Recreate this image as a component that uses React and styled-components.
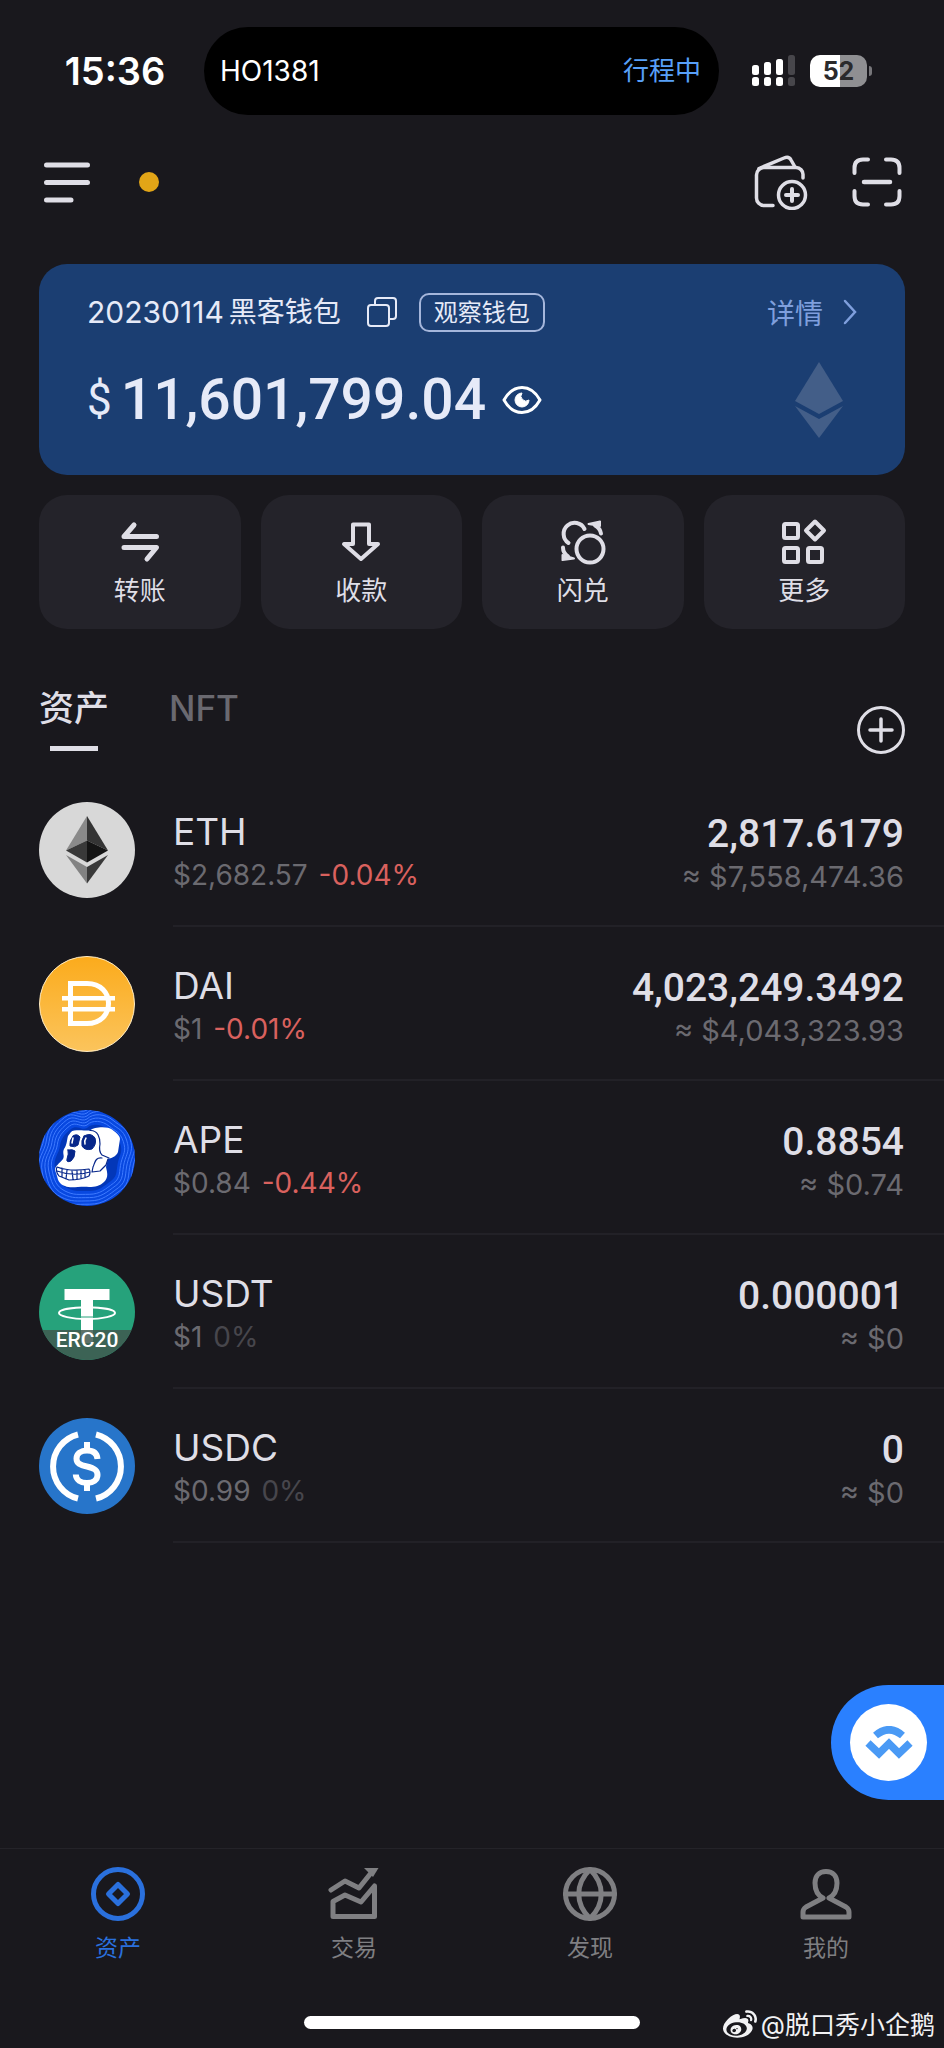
import React, { useState } from "react";
import styled, { createGlobalStyle } from "styled-components";
import { FaWeibo } from "react-icons/fa";

const sans = `Inter, "Noto Sans CJK SC", sans-serif`;
const digits = `Roboto, "Noto Sans CJK SC", sans-serif`;

const assets = [
  { symbol: "ETH", price: "$2,682.57", change: "-0.04%", amount: "2,817.6179", value: "≈ $7,558,474.36" },
  { symbol: "DAI", price: "$1", change: "-0.01%", amount: "4,023,249.3492", value: "≈ $4,043,323.93" },
  { symbol: "APE", price: "$0.84", change: "-0.44%", amount: "0.8854", value: "≈ $0.74" },
  { symbol: "USDT", price: "$1", change: "0%", amount: "0.000001", value: "≈ $0" },
  { symbol: "USDC", price: "$0.99", change: "0%", amount: "0", value: "≈ $0" },
];

const EthCoin = () => (
  <svg width="96" height="96" viewBox="0 0 96 96">
    <circle cx="48" cy="48" r="48" fill="#d8d8d8" />
    <path d="M48 14 27 48.500 48 38.500Z" fill="#8a8a8a" />
    <path d="M48 14 69 48.500 48 38.500Z" fill="#343434" />
    <path d="M27 48.500 48 38.500V60.500Z" fill="#393939" />
    <path d="M69 48.500 48 38.500V60.500Z" fill="#141414" />
    <path d="M27 53 48 65V81.500Z" fill="#828282" />
    <path d="M69 53 48 65V81.500Z" fill="#393939" />
  </svg>
);

const DaiCoin = () => (
  <svg width="96" height="96" viewBox="0 0 96 96" fill="none">
    <defs>
      <linearGradient id="dai" x1="0" y1="0" x2="0" y2="1">
        <stop offset="0" stopColor="#fbab1c" />
        <stop offset="1" stopColor="#fbc45c" />
      </linearGradient>
    </defs>
    <circle cx="48" cy="48" r="47.500" fill="url(#dai)" stroke="#fdebc5" />
    <path d="M31.500 27.500H48C62 27.500 69.500 37 69.500 47.500S62 67.500 48 67.500H31.500Z" stroke="#fff" strokeWidth="5" />
    <path d="M23 42.200H76M23 53.200H76" stroke="#fff" strokeWidth="4.600" />
  </svg>
);

const ring = "M0 -30C5 -35 14 -34 20 -29S30 -24 33 -15 33 -4 31 4 31 18 24 23 12 33 2 33 -12 34 -20 30 -30 20 -32 10 -28 -4 -27 -12 -22 -24 -16 -29 -5 -27 0 -30Z";

const ApeCoin = () => (
  <svg width="96" height="96" viewBox="0 0 96 96" fill="none">
    <defs>
      <clipPath id="ape">
        <circle cx="48" cy="48" r="48" />
      </clipPath>
    </defs>
    <g clipPath="url(#ape)">
      <rect width="96" height="96" fill="#0848e0" />
      <g stroke="#3f7bff" transform="translate(48 48)">
        {[1.1, 1.2, 1.3, 1.4, 1.5, 1.6, 1.72, 1.84].map((s) => (
          <path key={s} d={ring} transform={`scale(${s})`} strokeWidth={1 / s} />
        ))}
      </g>
      <path d={ring} transform="translate(48 48)" fill="#0337b8" />
    </g>
    <path
      d="M32 22C35 19 47 21 51 20.500C55 17 68 16 73 19.500C76 22 81 25 81 29L79 42C77 47 72 48 69 49L67 57C68 62 70 67 65 72C61 76 56 77 50 77C40 76 32 79 26 76C20 74 19 70 18 66L16 60C16 56 20 54 24 49C26 46 23 43 25 39C28 35 28 29 29 26Z"
      fill="#fff"
    />
    <g stroke="#06268a" strokeLinejoin="round" strokeLinecap="round">
      <path d="M51 20.500C59 20 61 28 61 34C60 39 61 43 63 45L70 48M63 48C56 47 56 53 54 57L53 62 61 61 67 55 69 49" strokeWidth="1.200" />
      <path d="M34 26Q38 23 41 27L39 35Q36 38 31 36Q30 31 34 26Z" fill="#06268a" />
      <path d="M45 26Q52 22 56 28Q58 34 53 39Q46 41 43 36Q42 30 45 26Z" fill="#06268a" />
      <path d="M29 40Q34 39 36 41Q36 48 32 51Q27 53 28 49Q30 44 29 40Z" fill="#06268a" />
      <path d="M18 57Q31 62 50 59Q52 62 50 66Q42 70 30 70L20 66Q16 61 18 57ZM18 61Q34 67 51 62M23 58V67M28 60 27 69M33 61 34 69M38 61V69M42 60V68M46 60V67" strokeWidth="1.200" />
      <path d="M47 28Q45 31 46 34M34 28 33 33" stroke="#fff" strokeWidth="1.500" />
    </g>
  </svg>
);

const UsdtCoin = () => (
  <svg width="96" height="96" viewBox="0 0 96 96" fill="none">
    <circle cx="48" cy="48" r="48" fill="#26a27b" />
    <path d="M25.500 25H70.500V36H54V79H42V36H25.500Z" fill="#fff" />
    <path d="M42 43.500C29 44 20 46 20 49S32 55 48 55 76 52 76 49 67 44 54 43.500" stroke="#fff" strokeWidth="2" />
    <path d="M42 53H54" stroke="#26a27b" />
    <path d="M3.500 66H92.500A48 48 0 0 1 3.500 66Z" fill="#41584f" fillOpacity="0.850" />
  </svg>
);

const UsdcCoin = () => (
  <svg width="96" height="96" viewBox="0 0 96 96" fill="none">
    <circle cx="48" cy="48" r="48" fill="#2775ca" />
    <g stroke="#fff" strokeWidth="6">
      <path d="M39 16.500A33 33 0 0 0 39 80.500M57 16.500A33 33 0 0 1 57 80.500" strokeLinejoin="round" />
      <path d="M58.500 41C58 35 54 32.500 48 32.500S37.500 35.500 37.500 40.500 41 47 48 48.500 58.500 52 58.500 57 54 65 48 65 37 62 36.800 56.500" />
      <path d="M48 24V34M48 63V73" />
    </g>
  </svg>
);

const coins = { ETH: EthCoin, DAI: DaiCoin, APE: ApeCoin, USDT: UsdtCoin, USDC: UsdcCoin };

const actions = [
  {
    label: "转账",
    icon: <path d="M40.500 18.500H8L18 7M8 29.500H40.500L31 41" strokeWidth="5" />,
  },
  {
    label: "收款",
    icon: <path d="M16 6.500H32V26H41L24 41 7 26H16Z" />,
  },
  {
    label: "闪兑",
    icon: (
      <>
        <circle cx="31" cy="31" r="13.500" />
        <path d="M9.500 25A11 11 0 1 1 25.500 11M42 15.500Q41 10 36 7.500M4 29.500Q4 35 9 38.500" />
        <path d="M29.500 6 41 3.500 41 8ZM15 40.500 3.500 42 3.500 37Z" fill="currentColor" strokeWidth="2" />
      </>
    ),
  },
  {
    label: "更多",
    icon: (
      <>
        <rect x="4" y="6" width="14" height="14" rx="1.500" />
        <rect x="4" y="30" width="14" height="14" rx="1.500" />
        <rect x="28" y="30" width="14" height="14" rx="1.500" />
        <path d="M35 3.500 44 12.500 35 21.500 26 12.500Z" />
      </>
    ),
  },
];

const navItems = [
  {
    label: "资产",
    icon: (
      <>
        <circle cx="27" cy="27" r="24.500" />
        <path d="M27 17.500 36.500 27 27 36.500 17.500 27Z" />
      </>
    ),
  },
  {
    label: "交易",
    icon: (
      <>
        <path d="M4 23 18 14 32 21 44 6M6 49.500V34.500L18 28 34 35 47.500 19V49.500Z" />
        <path d="M37 1H51.500L46 10Z" fill="currentColor" stroke="none" />
      </>
    ),
  },
  {
    label: "发现",
    icon: (
      <>
        <circle cx="27" cy="27" r="24.500" />
        <path d="M27 2.500C12 17 12 37 27 51.500C42 37 42 17 27 2.500ZM2.500 27H51.500" />
      </>
    ),
  },
  {
    label: "我的",
    icon: (
      <path d="M24 31C18 28 16 22 16 16C16 9 20 4.500 27 4.500S38 9 38 16C38 22 36 28 30 31M24 31 7 40Q4 42 4 45V50H50V45Q50 42 47 40L30 31" />
    ),
  },
];

const App = () => {
  const [tab, setTab] = useState("资产");
  const [nav, setNav] = useState("资产");
  const [hidden, setHidden] = useState(false);

  return (
    <Page>
      <GlobalStyle />
      <StatusBar>
        <Clock>15:36</Clock>
        <Island>
          <span>HO1381</span>
          <Trip>行程中</Trip>
        </Island>
        <StatusIcons>
          <svg width="44" height="32" viewBox="0 0 44 32" fill="#fff">
            <rect x="0" y="10" width="7" height="10" rx="2.500" />
            <rect x="12" y="7" width="7" height="13" rx="2.500" />
            <rect x="24" y="4" width="7" height="16" rx="2.500" />
            <rect x="36" y="0" width="7" height="20" rx="2.500" fill="#47464b" />
            <rect x="0" y="22" width="7" height="9" rx="2.500" />
            <rect x="12" y="22" width="7" height="9" rx="2.500" />
            <rect x="24" y="22" width="7" height="9" rx="2.500" />
            <rect x="36" y="22" width="7" height="9" rx="2.500" fill="#47464b" />
          </svg>
          <Battery>52</Battery>
        </StatusIcons>
      </StatusBar>

      <Header>
        <IconButton aria-label="menu">
          <svg width="46" height="44" viewBox="0 0 46 44" stroke="currentColor" strokeWidth="5" strokeLinecap="round">
            <path d="M2.500 5H43.500M2.500 22.500H43.500M2.500 40H27" />
          </svg>
        </IconButton>
        <Dot />
        <HeaderRight>
          <IconButton aria-label="add wallet">
            <svg width="56" height="56" viewBox="0 0 56 56" fill="none" stroke="currentColor" strokeWidth="3.500" strokeLinecap="round" strokeLinejoin="round">
              <path d="M49 24V21A7 7 0 0 0 42 13.500H10A7.500 7.500 0 0 0 2.500 21V44A7.500 7.500 0 0 0 10 51.500H19" />
              <path d="M5 14.500 30 4Q35 2 37 6L41 13" />
              <circle cx="38" cy="41" r="13.500" />
              <path d="M38 35V47M32 41H44" strokeWidth="4" />
            </svg>
          </IconButton>
          <IconButton aria-label="scan">
            <svg width="50" height="50" viewBox="0 0 50 50" fill="none" stroke="currentColor" strokeWidth="4" strokeLinecap="round">
              <path d="M2.500 16V11Q2.500 2.500 11 2.500H16M34 2.500H39Q47.500 2.500 47.500 11V16M47.500 34V39Q47.500 47.500 39 47.500H34M16 47.500H11Q2.500 47.500 2.500 39V34" />
              <path d="M12 25H38" strokeWidth="4.500" />
            </svg>
          </IconButton>
        </HeaderRight>
      </Header>

      <WalletCard>
        <CardRow>
          <WalletName>
            <WalletDate>20230114</WalletDate>
            黑客钱包
          </WalletName>
          <IconButton aria-label="copy address">
            <svg width="30" height="30" viewBox="0 0 30 30" fill="none" stroke="currentColor" strokeWidth="2">
              <rect x="1" y="8" width="21" height="21" rx="3" />
              <path d="M8 8V4Q8 1 11 1H26Q29 1 29 4V19Q29 22 26 22H22" />
            </svg>
          </IconButton>
          <Badge>观察钱包</Badge>
          <DetailLink href="#detail">
            详情
            <svg width="14" height="26" viewBox="0 0 14 26" fill="none" stroke="currentColor" strokeWidth="2.500" strokeLinecap="round">
              <path d="M2 2 12 13 2 24" />
            </svg>
          </DetailLink>
        </CardRow>
        <BalanceRow>
          <Currency>$</Currency>
          <Balance>{hidden ? "******" : "11,601,799.04"}</Balance>
          <IconButton aria-label="toggle balance" onClick={() => setHidden(!hidden)}>
            <svg width="40" height="30" viewBox="0 0 40 30" fill="none" stroke="#fff" strokeWidth="3" strokeLinejoin="round">
              <path d="M2 15C7 6 13 2.500 20 2.500S33 6 38 15C33 24 27 27.500 20 27.500S7 24 2 15Z" />
              <path d="M20 8A7 7 0 1 0 27 15A5 5 0 0 1 20 8Z" fill="#fff" strokeWidth="1" />
            </svg>
          </IconButton>
          <ChainMark width="48" height="76" viewBox="0 0 48 76" fill="#435e88">
            <path d="M24 0 48 39 24 52 0 39Z" />
            <path d="M0 44 24 57 48 44 24 76Z" />
          </ChainMark>
        </BalanceRow>
      </WalletCard>

      <Actions>
        {actions.map(({ label, icon }) => (
          <ActionButton key={label}>
            <svg width="48" height="48" viewBox="0 0 48 48" fill="none" stroke="currentColor" strokeWidth="4" strokeLinejoin="round" strokeLinecap="round">
              {icon}
            </svg>
            {label}
          </ActionButton>
        ))}
      </Actions>

      <TabBar>
        {["资产", "NFT"].map((name) => (
          <Tab key={name} $active={tab === name} onClick={() => setTab(name)}>
            {name}
          </Tab>
        ))}
        <AddButton aria-label="add asset">
          <svg width="48" height="48" viewBox="0 0 48 48" fill="none" stroke="currentColor" strokeWidth="3" strokeLinecap="round">
            <circle cx="24" cy="24" r="22.500" />
            <path d="M24 13V35M13 24H35" strokeWidth="3.500" />
          </svg>
        </AddButton>
      </TabBar>

      <AssetList>
        {assets.map((asset) => {
          const Coin = coins[asset.symbol];
          return (
            <AssetRow key={asset.symbol}>
              <CoinWrapper>
                <Coin />
                {asset.symbol === "USDT" && <CoinTag>ERC20</CoinTag>}
              </CoinWrapper>
              <AssetBody>
                <AssetInfo>
                  <Symbol>{asset.symbol}</Symbol>
                  <Price>
                    {asset.price} <Change $down={asset.change.startsWith("-")}>{asset.change}</Change>
                  </Price>
                </AssetInfo>
                <AssetInfo $right>
                  <Amount>{asset.amount}</Amount>
                  <Value>{asset.value}</Value>
                </AssetInfo>
              </AssetBody>
            </AssetRow>
          );
        })}
      </AssetList>

      <ConnectButton aria-label="WalletConnect">
        <ConnectCircle>
          <svg width="48" height="34" viewBox="0 0 48 34" fill="none" stroke="#4a9af5" strokeWidth="7.500">
            <path d="M10.500 9.500Q24 -2 37.500 9.500" />
            <path d="M3 17 14 27.500 24 17.500 34 27.500 45 17" />
          </svg>
        </ConnectCircle>
      </ConnectButton>

      <BottomNav>
        {navItems.map(({ label, icon }) => (
          <NavButton key={label} $active={nav === label} onClick={() => setNav(label)}>
            <svg width="54" height="54" viewBox="0 0 54 54" fill="none" stroke="currentColor" strokeWidth="5" strokeLinejoin="round" strokeLinecap="round">
              {icon}
            </svg>
            {label}
          </NavButton>
        ))}
      </BottomNav>
      <HomeBar />
      <Watermark>
        <FaWeibo size={34} />
        @脱口秀小企鹅
      </Watermark>
    </Page>
  );
};

export default App;

const GlobalStyle = createGlobalStyle`
    * {
        box-sizing: border-box;
    }
    body {
        margin: 0;
        background-color: #19181d;
    }
    button {
        padding: 0;
        border: none;
        background: none;
        color: inherit;
        font-family: inherit;
        cursor: pointer;
    }
    svg {
        display: block;
        flex-shrink: 0;
    }
`

const Page = styled.div`
    position: relative;
    display: flex;
    flex-direction: column;
    min-height: 100vh;
    background-color: #19181d;
    color: #dfdee6;
    font-family: ${sans};
`

const StatusBar = styled.div`
    display: grid;
    grid-template-columns: minmax(0, 204fr) minmax(0, 515fr) minmax(0, 225fr);
    align-items: center;
    padding-top: 27px;
    color: #fff;
`

const Clock = styled.div`
    padding-left: 26px;
    font-size: 38px;
    font-weight: 600;
    text-align: center;
`

const Island = styled.div`
    display: flex;
    justify-content: space-between;
    align-items: center;
    height: 88px;
    padding: 0 18px 0 16px;
    border-radius: 44px;
    background-color: #000;
    font-size: 28px;
`

const Trip = styled.span`
    color: #58a0f8;
    font-size: 26px;
    line-height: 36px;
`

const StatusIcons = styled.div`
    display: flex;
    align-items: center;
    gap: 14px;
    padding-left: 33px;
`

const Battery = styled.div`
    position: relative;
    width: 57px;
    height: 32px;
    border-radius: 10px;
    background: linear-gradient(90deg, #fff 52%, #8f8f92 52%);
    color: #2a2a2c;
    font-size: 25px;
    font-weight: 700;
    line-height: 32px;
    text-align: center;

    &::after {
        content: '';
        position: absolute;
        right: -5px;
        top: 11px;
        width: 3px;
        height: 10px;
        border-radius: 0 4px 4px 0;
        background-color: #77767a;
    }
`

const Header = styled.header`
    display: flex;
    align-items: center;
    padding: 39px 42px 54px 44px;
`

const HeaderRight = styled.div`
    display: flex;
    align-items: center;
    gap: 42px;
    margin-left: auto;
`

const IconButton = styled.button`
    display: flex;
    align-items: center;
`

const Dot = styled.span`
    width: 20px;
    height: 20px;
    margin-left: 49px;
    border-radius: 50%;
    background-color: #e2a517;
`

const WalletCard = styled.section`
    height: 211px;
    margin: 0 39px 20px;
    padding: 28px 48px 0;
    border-radius: 28px;
    background-color: #1b3e72;
    color: #e6eaf8;
`

const CardRow = styled.div`
    display: flex;
    align-items: center;
`

const WalletName = styled.h1`
    display: flex;
    align-items: center;
    gap: 5px;
    margin: 0 26px 0 0;
    font-size: 28px;
    font-weight: 400;
    line-height: 40px;
    white-space: nowrap;
`

const WalletDate = styled.span`
    font-size: 30px;
`

const Badge = styled.span`
    margin-left: 22px;
    padding: 0 13px;
    border: 2px solid #a5b6db;
    border-radius: 10px;
    font-size: 24px;
    line-height: 35px;
    white-space: nowrap;
`

const DetailLink = styled.a`
    display: flex;
    align-items: center;
    gap: 20px;
    margin-left: auto;
    color: #7f9fdd;
    font-size: 28px;
    text-decoration: none;
    white-space: nowrap;
`

const BalanceRow = styled.div`
    display: flex;
    align-items: center;
    margin-top: 24px;
    font-family: ${digits};
    font-weight: 500;
`

const Currency = styled.span`
    font-size: 44px;
    font-weight: 400;
`

const Balance = styled.span`
    margin: 0 16px 0 9px;
    font-size: 57px;
    line-height: 88px;
`

const ChainMark = styled.svg`
    margin: 0 14px 0 auto;
`

const Actions = styled.div`
    display: grid;
    grid-template-columns: repeat(4, 1fr);
    gap: 20px;
    padding: 0 39px;
`

const ActionButton = styled.button`
    display: flex;
    flex-direction: column;
    align-items: center;
    gap: 5px;
    height: 134px;
    padding-top: 23px;
    border-radius: 28px;
    background-color: #24232a;
    font-size: 26px;
    line-height: 40px;
`

const TabBar = styled.div`
    display: flex;
    align-items: flex-end;
    gap: 60px;
    padding: 57px 39px 19px;
`

const Tab = styled.button`
    display: flex;
    flex-direction: column;
    align-items: center;
    gap: 16px;
    margin-bottom: 3px;
    color: ${({ $active }) => ($active ? '#dfdee6' : '#6a6970')};
    font-size: 35px;
    font-weight: 500;
    line-height: 44px;

    &::after {
        content: '';
        width: 48px;
        height: 5px;
        background-color: ${({ $active }) => ($active ? '#dfdee6' : 'transparent')};
    }
`

const AddButton = styled.button`
    margin-left: auto;
`

const AssetList = styled.ul`
    margin: 0;
    padding: 0;
    list-style: none;
`

const AssetRow = styled.li`
    display: flex;
    align-items: center;
    gap: 38px;
    height: 154px;
    padding-left: 39px;
`

const CoinWrapper = styled.div`
    position: relative;
    flex-shrink: 0;
`

const CoinTag = styled.span`
    position: absolute;
    left: 0;
    right: 0;
    bottom: 8px;
    color: #fff;
    font-family: ${digits};
    font-size: 21px;
    font-weight: 500;
    line-height: 24px;
    text-align: center;
`

const AssetBody = styled.div`
    display: flex;
    justify-content: space-between;
    align-items: center;
    flex: 1;
    height: 100%;
    padding: 0 40px 0 0;
    border-bottom: 2px solid #222127;
`

const AssetInfo = styled.div`
    display: flex;
    flex-direction: column;
    padding-top: ${({ $right }) => ($right ? '9px' : '6px')};
    text-align: ${({ $right }) => ($right ? 'right' : 'left')};
`

const Symbol = styled.span`
    font-size: 37px;
    line-height: 46px;
`

const Amount = styled.span`
    font-family: ${digits};
    font-size: 39px;
    font-weight: 500;
    line-height: 46px;
`

const Price = styled.span`
    color: #6b6a70;
    font-size: 28px;
    line-height: 40px;
`

const Value = styled(Price)`
    font-size: 29px;
`

const Change = styled.span`
    margin-left: 3px;
    color: ${({ $down }) => ($down ? '#d9615e' : '#47464c')};
`

const ConnectButton = styled.button`
    position: fixed;
    right: 0;
    bottom: 248px;
    width: 113px;
    height: 115px;
    padding-left: 19px;
    border-radius: 58px 0 0 58px;
    background-color: #2a80ff;
`

const ConnectCircle = styled.span`
    display: flex;
    justify-content: center;
    align-items: center;
    width: 77px;
    height: 77px;
    border-radius: 50%;
    background-color: #fff;
`

const BottomNav = styled.nav`
    display: grid;
    grid-template-columns: repeat(4, 1fr);
    margin-top: auto;
    padding: 18px 0 49px;
    border-top: 1px solid #242329;
`

const NavButton = styled.button`
    display: flex;
    flex-direction: column;
    align-items: center;
    gap: 8px;
    color: ${({ $active }) => ($active ? '#2a70dd' : '#7f7f82')};
    font-size: 23px;
    line-height: 38px;
`

const HomeBar = styled.div`
    align-self: center;
    width: 336px;
    height: 13px;
    margin-bottom: 19px;
    border-radius: 7px;
    background-color: #fff;
`

const Watermark = styled.div`
    position: absolute;
    right: 9px;
    bottom: 4px;
    display: flex;
    align-items: center;
    gap: 4px;
    color: #f2f2f4;
    font-size: 25px;
    line-height: 38px;
`
